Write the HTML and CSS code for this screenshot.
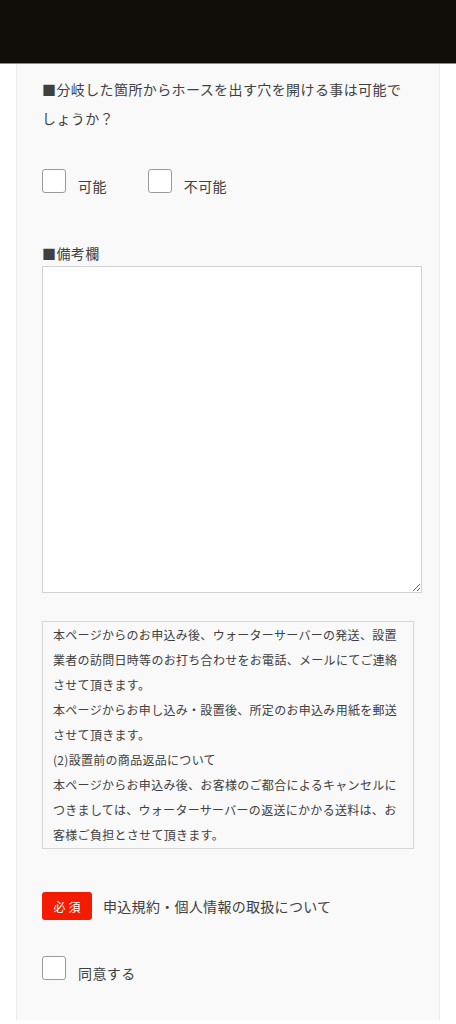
FILE: index.html
```html
<!DOCTYPE html>
<html lang="ja">
<head>
<meta charset="utf-8">
<title>お申込みフォーム</title>
<link rel="stylesheet" href="styles.css">
</head>
<body>
<header class="topbar"></header>
<main class="panel">
  <p class="question">■分岐した箇所からホースを出す穴を開ける事は可能でしょうか？</p>
  <div class="choices">
    <label class="choice"><span class="box"></span><span class="choice-text">可能</span></label>
    <label class="choice"><span class="box"></span><span class="choice-text">不可能</span></label>
  </div>
  <p class="field-label">■備考欄</p>
  <textarea class="memo"></textarea>
  <div class="notice">
    <p>本ページからのお申込み後、ウォーターサーバーの発送、設置業者の訪問日時等のお打ち合わせをお電話、メールにてご連絡させて頂きます。</p>
    <p>本ページからお申し込み・設置後、所定のお申込み用紙を郵送させて頂きます。</p>
    <p>(2)設置前の商品返品について</p>
    <p>本ページからお申込み後、お客様のご都合によるキャンセルにつきましては、ウォーターサーバーの返送にかかる送料は、お客様ご負担とさせて頂きます。</p>
  </div>
  <div class="terms-head">
    <span class="badge">必須</span>
    <span class="terms-title">申込規約・個人情報の取扱について</span>
  </div>
  <div class="choices agree">
    <label class="choice"><span class="box"></span><span class="choice-text">同意する</span></label>
  </div>
</main>
</body>
</html>
```
FILE: styles.css
```css
html, body {
  margin: 0;
  padding: 0;
  background: #ffffff;
  font-family: "Noto Sans CJK JP", "Noto Sans", sans-serif;
  color: #404040;
}
.topbar {
  height: 63px;
  background: #110d09;
  border-bottom: 1px solid #8a8784;
}
.panel {
  margin: 0 16px;
  background: #f9f9f9;
  border-left: 1px solid #ececec;
  border-right: 1px solid #ececec;
  padding: 11px 25px 40px;
  min-height: 920px;
  box-sizing: border-box;
}
.question {
  margin: 0;
  font-size: 14px;
  letter-spacing: 0.4px;
  line-height: 29px;
}
.choices {
  display: flex;
  gap: 41px;
  margin-top: 36px;
}
.choice {
  display: flex;
  align-items: flex-end;
  gap: 12px;
}
.box {
  width: 22px;
  height: 22px;
  border: 1px solid #9a9a9a;
  border-radius: 3px;
  background: #ffffff;
}
.choice-text {
  font-size: 14px;
  line-height: 14px;
  letter-spacing: 0.4px;
}
.field-label {
  margin: 50px 0 2px;
  font-size: 14px;
  line-height: 21px;
  letter-spacing: 0.4px;
}
.memo {
  display: block;
  width: 100%;
  height: 319px;
  padding: 3px;
  margin: 0;
  border: 1px solid #d2d2d2;
  background: #ffffff;
  box-sizing: content-box;
  font-family: inherit;
}
.notice {
  margin-top: 28px;
  border: 1px solid #d6d6d6;
  padding: 0 11px 1px 10px;
  font-size: 12px;
  letter-spacing: 0.3px;
  line-height: 25px;
  color: #404040;
}
.notice p {
  margin: 0;
}
.terms-head {
  display: flex;
  align-items: center;
  gap: 11px;
  margin-top: 43px;
}
.badge {
  width: 50px;
  height: 28px;
  border-radius: 3px;
  background: #f41c00;
  color: #ffffff;
  font-size: 12px;
  letter-spacing: 3px;
  text-indent: 3px;
  display: flex;
  align-items: center;
  justify-content: center;
}
.terms-title {
  font-size: 14px;
  letter-spacing: 0.3px;
}
.agree {
  margin-top: 36px;
}
```
